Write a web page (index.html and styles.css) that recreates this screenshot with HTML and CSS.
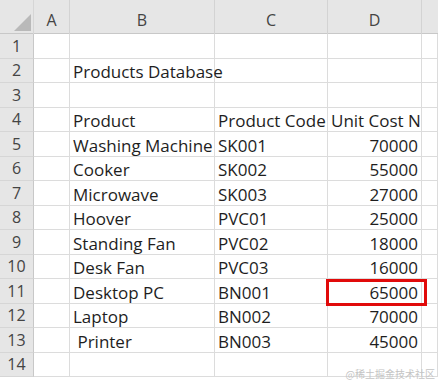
FILE: index.html
```html
<!DOCTYPE html>
<html lang="en">
<head>
  <meta charset="UTF-8" />
  <meta name="viewport" content="width=device-width, initial-scale=1.0"/>
  <title>Products Database</title>
  <link rel="stylesheet" href="styles.css">
</head>
<body>

  <div class="sheet">
    <div class="row head">
      <div class="corner">
        <svg width="34" height="34" viewBox="0 0 34 34"><polygon points="31,14 31,31 14,31" fill="#b9b9b9"/></svg>
      </div>
      <div class="col-head">A</div>
      <div class="col-head">B</div>
      <div class="col-head">C</div>
      <div class="col-head">D</div>
      <div class="col-head last"></div>
    </div>

    <div class="row"><div class="num">1</div><div class="cell"></div><div class="cell"></div><div class="cell"></div><div class="cell"></div><div class="cell"></div></div>
    <div class="row"><div class="num">2</div><div class="cell"></div><div class="cell spill">Products Database</div><div class="cell"></div><div class="cell"></div><div class="cell"></div></div>
    <div class="row"><div class="num">3</div><div class="cell"></div><div class="cell"></div><div class="cell"></div><div class="cell"></div><div class="cell"></div></div>
    <div class="row"><div class="num">4</div><div class="cell"></div><div class="cell">Product</div><div class="cell">Product Code</div><div class="cell">Unit Cost N</div><div class="cell"></div></div>
    <div class="row"><div class="num">5</div><div class="cell"></div><div class="cell">Washing Machine</div><div class="cell">SK001</div><div class="cell amount">70000</div><div class="cell"></div></div>
    <div class="row"><div class="num">6</div><div class="cell"></div><div class="cell">Cooker</div><div class="cell">SK002</div><div class="cell amount">55000</div><div class="cell"></div></div>
    <div class="row"><div class="num">7</div><div class="cell"></div><div class="cell">Microwave</div><div class="cell">SK003</div><div class="cell amount">27000</div><div class="cell"></div></div>
    <div class="row"><div class="num">8</div><div class="cell"></div><div class="cell">Hoover</div><div class="cell">PVC01</div><div class="cell amount">25000</div><div class="cell"></div></div>
    <div class="row"><div class="num">9</div><div class="cell"></div><div class="cell">Standing Fan</div><div class="cell">PVC02</div><div class="cell amount">18000</div><div class="cell"></div></div>
    <div class="row"><div class="num">10</div><div class="cell"></div><div class="cell">Desk Fan</div><div class="cell">PVC03</div><div class="cell amount">16000</div><div class="cell"></div></div>
    <div class="row"><div class="num">11</div><div class="cell"></div><div class="cell">Desktop PC</div><div class="cell">BN001</div><div class="cell amount">65000</div><div class="cell"></div></div>
    <div class="row"><div class="num">12</div><div class="cell"></div><div class="cell">Laptop</div><div class="cell">BN002</div><div class="cell amount">70000</div><div class="cell"></div></div>
    <div class="row"><div class="num">13</div><div class="cell"></div><div class="cell"> Printer</div><div class="cell">BN003</div><div class="cell amount">45000</div><div class="cell"></div></div>
    <div class="row"><div class="num">14</div><div class="cell"></div><div class="cell"></div><div class="cell"></div><div class="cell"></div><div class="cell"></div></div>

    <div class="highlight"></div>
    <div class="watermark">@稀土掘金技术社区</div>
  </div>

</body>
</html>
```

FILE: styles.css
```css
body {
  margin: 0;
  background: #fff;
  font-family: "Open Sans", "Liberation Sans", sans-serif;
}

.sheet {
  position: relative;
  width: 438px;
  height: 383px;
  overflow: hidden;
}

.row {
  display: grid;
  grid-template-columns: 34px 36px 145px 113px 94px 16px;
  height: 24.5px;
}

.row.head {
  height: 34px;
  background: #e6e6e6;
  border-bottom: 1px solid #c8c8c8;
  box-sizing: border-box;
}

.corner {
  border-right: 1px solid #d6d6d6;
}

.corner svg {
  display: block;
}

.col-head {
  display: flex;
  align-items: flex-end;
  justify-content: center;
  padding-bottom: 3px;
  font-size: 16px;
  color: #444;
  border-right: 1px solid #d3d3d3;
}

.col-head.last {
  border-right: none;
}

.num {
  background: #e6e6e6;
  border-right: 1px solid #c8c8c8;
  border-bottom: 1px solid #d6d6d6;
  box-sizing: border-box;
  display: flex;
  align-items: flex-end;
  justify-content: center;
  padding-bottom: 1px;
  font-size: 16px;
  color: #444;
}

.cell {
  border-right: 1px solid #dcdcdc;
  border-bottom: 1px solid #dcdcdc;
  box-sizing: border-box;
  padding: 0 2px 1px 3px;
  display: flex;
  align-items: flex-end;
  font-size: 17px;
  line-height: 19px;
  color: #1e1e1e;
  white-space: pre;
  overflow: hidden;
}

.cell.spill {
  overflow: visible;
}

.cell.amount {
  justify-content: flex-end;
  padding-right: 3px;
}

.highlight {
  position: absolute;
  left: 326px;
  top: 279px;
  width: 101px;
  height: 27px;
  border: 3px solid #e10a0a;
  box-sizing: border-box;
}

.watermark {
  position: absolute;
  right: 3px;
  bottom: 2px;
  font-family: "Noto Sans CJK SC", sans-serif;
  font-size: 10px;
  color: #c4c4c4;
}
```
